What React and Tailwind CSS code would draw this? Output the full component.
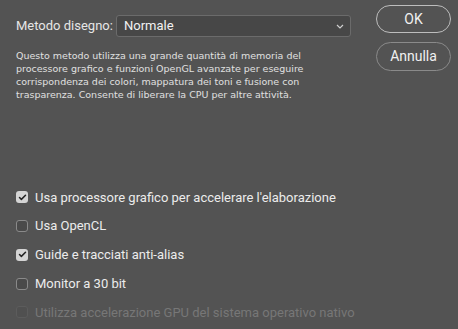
import { Check } from 'lucide-react';

const options = [
  { label: "Usa processore grafico per accelerare l'elaborazione", checked: true },
  { label: 'Usa OpenCL', checked: false },
  { label: 'Guide e tracciati anti-alias', checked: true },
  { label: 'Monitor a 30 bit', checked: false },
  { label: 'Utilizza accelerazione GPU del sistema operativo nativo', checked: false, disabled: true },
];

export default function App() {
  return (
    <div
      className="flex h-[329px] w-[458px] overflow-hidden bg-[#535353] pl-4"
      style={{ fontFamily: 'Roboto, "Liberation Sans", sans-serif' }}
    >
      <div className="w-[335px] shrink-0 pt-[15px]">
        <div className="flex h-[22px] items-center">
          <span className="w-[100px] shrink-0 whitespace-nowrap text-[13px] text-[#e6e6e6]">Metodo disegno:</span>
          <div className="flex h-[22px] w-[235px] shrink-0 items-center justify-between rounded-[3px] border border-[#6b6b6b] bg-[#474747] pl-[7px] pr-[6px]">
            <span className="text-[13px] text-[#f2f2f2]">Normale</span>
            <svg width="8" height="5" viewBox="0 0 8 5" className="text-[#cfcfcf]">
              <polyline points="1,1 4,4 7,1" fill="none" stroke="currentColor" strokeWidth="1.2" />
            </svg>
          </div>
        </div>

        <p
          className="mt-[12px] w-[300px] text-[9.5px] leading-[13px] text-[#e0e0e0]"
          style={{ fontFamily: '"DejaVu Sans", sans-serif' }}
        >
          Questo metodo utilizza una grande quantità di memoria del processore grafico e funzioni OpenGL avanzate per eseguire corrispondenza dei colori, mappatura dei toni e fusione con trasparenza. Consente di liberare la CPU per altre attività.
        </p>

        <div className="mt-[82px] flex flex-col">
          {options.map((opt) => (
            <div key={opt.label} className="flex h-[28.75px] items-center gap-[7px]">
              <span
                className={
                  opt.checked
                    ? 'flex h-[12px] w-[12px] shrink-0 items-center justify-center rounded-[3px] bg-[#d4d4d4]'
                    : opt.disabled
                      ? 'h-[12px] w-[12px] shrink-0 rounded-[3px] border border-[#5c5c5c] bg-[#505050]'
                      : 'h-[12px] w-[12px] shrink-0 rounded-[3px] border border-[#8a8a8a] bg-[#4a4a4a]'
                }
              >
                {opt.checked ? <Check className="h-[9px] w-[9px] text-[#222]" strokeWidth={4} /> : null}
              </span>
              <span className={`whitespace-nowrap text-[13px] ${opt.disabled ? 'text-[#777777]' : 'text-[#ececec]'}`}>
                {opt.label}
              </span>
            </div>
          ))}
        </div>
      </div>

      <div className="ml-[25px] flex w-[75px] shrink-0 flex-col gap-[9px] pt-[5px]">
        <button type="button" className="h-[28px] rounded-full border border-[#bdbdbd] text-[14px] text-[#f0f0f0]">
          OK
        </button>
        <button type="button" className="h-[29px] rounded-full border border-[#8a8a8a] text-[14px] text-[#f0f0f0]">
          Annulla
        </button>
      </div>
    </div>
  );
}
